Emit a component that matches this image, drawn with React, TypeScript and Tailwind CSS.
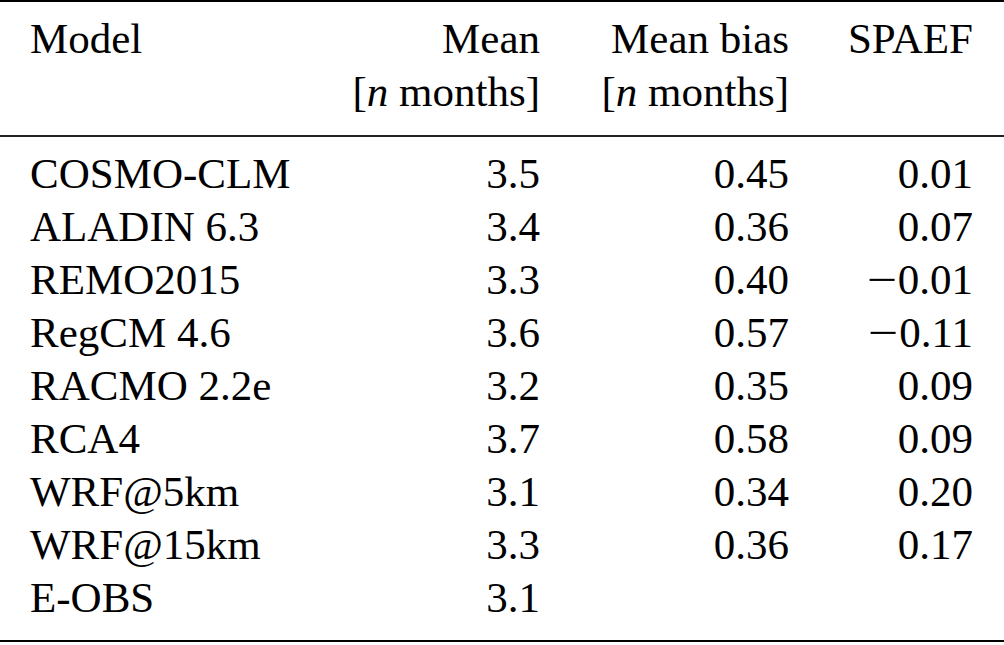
const rows: [string, string, string, string][] = [
  ["COSMO-CLM", "3.5", "0.45", "0.01"],
  ["ALADIN 6.3", "3.4", "0.36", "0.07"],
  ["REMO2015", "3.3", "0.40", "-0.01"],
  ["RegCM 4.6", "3.6", "0.57", "-0.11"],
  ["RACMO 2.2e", "3.2", "0.35", "0.09"],
  ["RCA4", "3.7", "0.58", "0.09"],
  ["WRF@5km", "3.1", "0.34", "0.20"],
  ["WRF@15km", "3.3", "0.36", "0.17"],
  ["E-OBS", "3.1", "", ""],
];

const cols = "grid grid-cols-[300px_210px_249px_184px] pl-[30px] pr-[31px]";

function Num({ v }: { v: string }) {
  if (v.startsWith("-")) {
    return (
      <>
        <span className="inline-block w-[31px] text-left scale-x-125 origin-left">{"\u2212"}</span>
        {v.slice(1)}
      </>
    );
  }
  return <>{v}</>;
}

export default function App() {
  return (
    <div className="w-[1004px] h-[645px] bg-white text-black font-['Liberation_Serif','Times_New_Roman',Times,serif] text-[43px] leading-[53px]">
      <div className="border-t-2 border-black" />
      <div className={`${cols} pt-[10px] pb-[17px]`}>
        <div>Model</div>
        <div className="text-right whitespace-nowrap">
          <div>Mean</div>
          <div>
            [<i>n</i> months]
          </div>
        </div>
        <div className="text-right whitespace-nowrap">
          <div>Mean bias</div>
          <div>
            [<i>n</i> months]
          </div>
        </div>
        <div className="text-right">SPAEF</div>
      </div>
      <div className="border-t-2 border-[#222]" />
      <div className="pt-[10px] pb-[16px]">
        {rows.map((r) => (
          <div key={r[0]} className={cols}>
            <div className="whitespace-nowrap">{r[0]}</div>
            <div className="text-right">{r[1]}</div>
            <div className="text-right">{r[2]}</div>
            <div className="text-right whitespace-nowrap">
              <Num v={r[3]} />
            </div>
          </div>
        ))}
      </div>
      <div className="border-t-2 border-black" />
    </div>
  );
}
